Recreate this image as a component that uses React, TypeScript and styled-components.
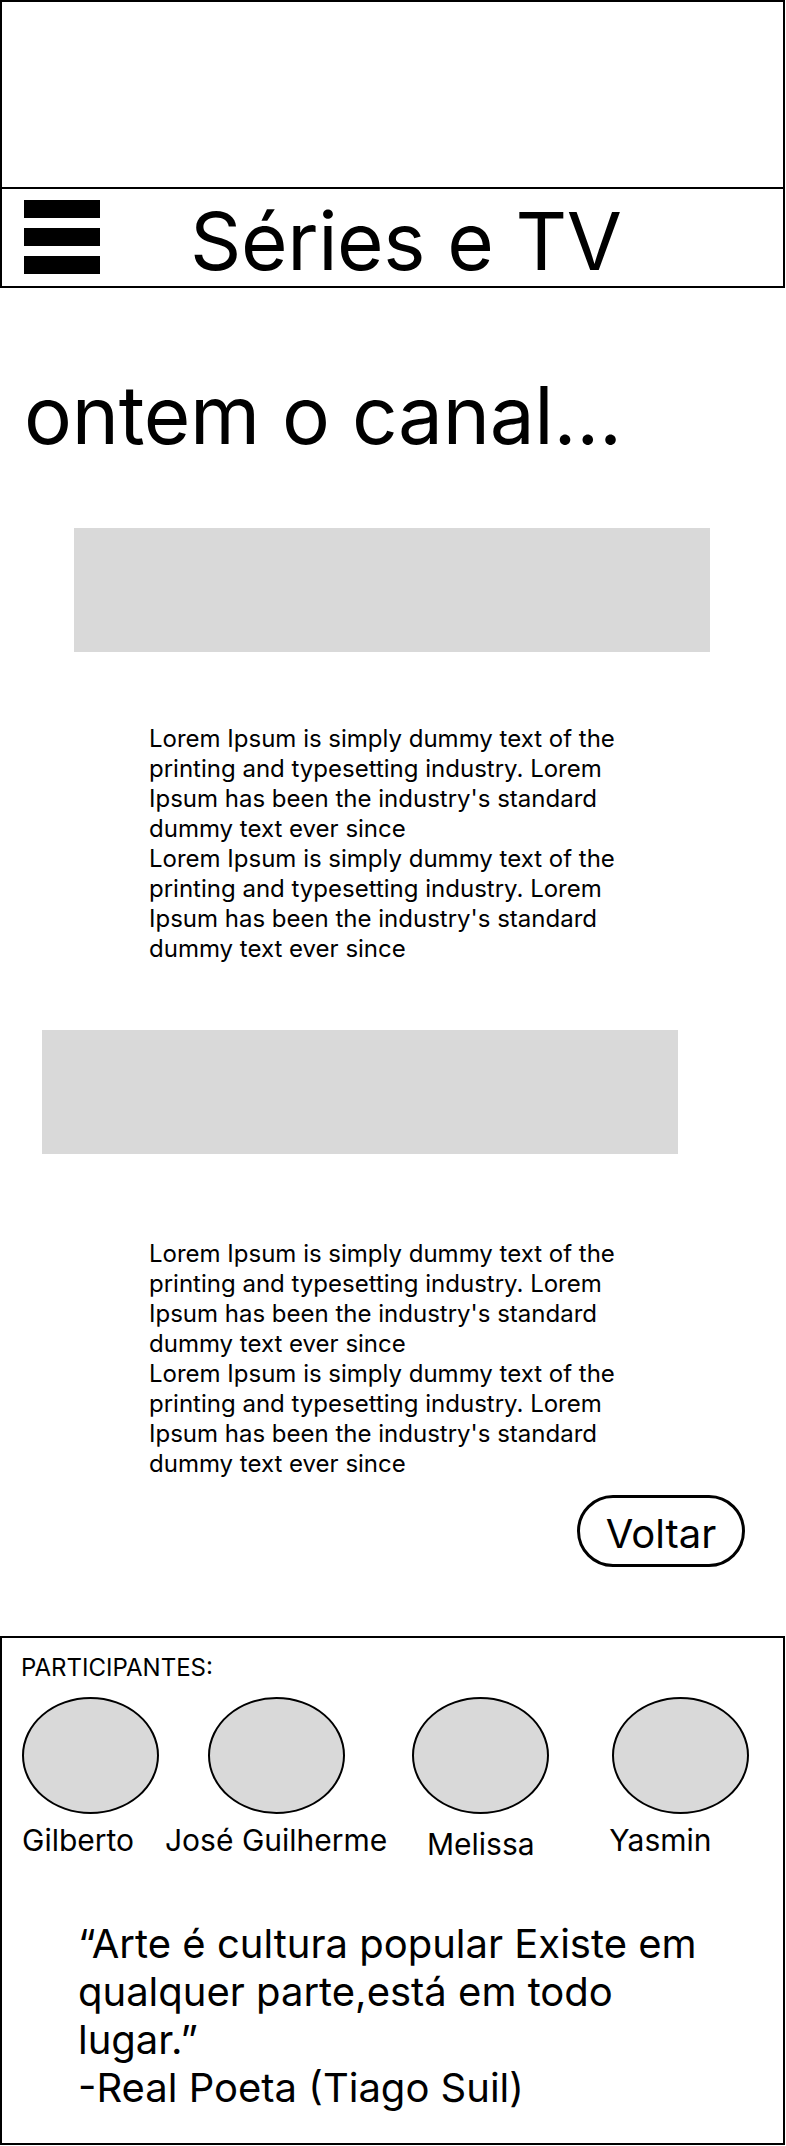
import React from "react";
import styled, { createGlobalStyle } from "styled-components";

const GlobalStyle = createGlobalStyle`
  * { box-sizing: border-box; }
  body {
    margin: 0;
    background: #ffffff;
    color: #000000;
    font-family: Inter, "Noto Sans", "Liberation Sans", sans-serif;
  }
`;

const Page = styled.main`
  width: 786px;
  display: flex;
  flex-direction: column;
  align-items: flex-start;
`;

const Header = styled.header`
  width: 785px;
  border: 2px solid #000;
  display: flex;
  flex-direction: column;
`;

const Banner = styled.div`
  height: 185px;
`;

const NavBar = styled.nav`
  height: 99px;
  border-top: 2px solid #000;
  display: flex;
  align-items: flex-start;
  padding-left: 22px;
`;

const Burger = styled.div`
  margin-top: 11px;
  display: flex;
  flex-direction: column;
  gap: 10px;
`;

const BurgerBar = styled.span`
  display: block;
  width: 76px;
  height: 18px;
  background: #000;
`;

const SiteTitle = styled.h1`
  margin: 12px 0 0 90px;
  font-size: 80px;
  font-weight: 400;
  line-height: 80px;
  letter-spacing: -0.4px;
`;

const Headline = styled.h2`
  margin: 78px 0 0 24px;
  font-size: 80px;
  font-weight: 400;
  line-height: 97px;
  letter-spacing: -0.3px;
`;

const Placeholder = styled.div<{ $left: number; $top: number }>`
  margin-top: ${(p) => p.$top}px;
  margin-left: ${(p) => p.$left}px;
  width: 636px;
  height: 124px;
  background: #d9d9d9;
`;

const Body = styled.p<{ $top: number }>`
  margin: ${(p) => p.$top}px 0 0 149px;
  width: 490px;
  font-size: 24px;
  line-height: 30px;
  font-weight: 400;
`;

const BackRow = styled.div`
  width: 100%;
  display: flex;
  justify-content: flex-start;
  margin-top: 16px;
`;

const BackButton = styled.button`
  margin-left: 577px;
  width: 168px;
  height: 72px;
  border: 3px solid #000;
  border-radius: 36px;
  background: #fff;
  color: #000;
  font-family: Inter, "Noto Sans", sans-serif;
  font-size: 40px;
  line-height: 48px;
  padding: 6px 0 0 0;
  cursor: pointer;
`;

const Footer = styled.footer`
  margin-top: 69px;
  width: 785px;
  height: 509px;
  border: 2px solid #000;
  display: flex;
  flex-direction: column;
  padding: 15px 0 0 19px;
`;

const SectionLabel = styled.h3`
  margin: 0;
  font-size: 24px;
  font-weight: 400;
  line-height: 29px;
`;

const People = styled.ul`
  list-style: none;
  margin: 15px 0 0 1px;
  padding: 0;
  display: flex;
  align-items: flex-start;
`;

const Person = styled.li<{ $offset: number; $align: "flex-start" | "center" }>`
  margin-left: ${(p) => p.$offset}px;
  display: flex;
  flex-direction: column;
  align-items: ${(p) => p.$align};
  gap: 8px;
`;

const Avatar = styled.div`
  width: 137px;
  height: 117px;
  border-radius: 50%;
  border: 2px solid #000;
  background: #d9d9d9;
`;

const PersonName = styled.span<{ $drop: number; $nudge: number }>`
  margin-top: ${(p) => p.$drop}px;
  margin-left: ${(p) => p.$nudge}px;
  font-size: 30px;
  line-height: 36px;
  white-space: nowrap;
`;

const Quote = styled.blockquote`
  margin: 58px 0 0 57px;
  width: 640px;
  font-size: 40px;
  line-height: 48px;
`;

const people = [
  { name: "Gilberto", offset: 0, align: "flex-start" as const, drop: 0, nudge: 0 },
  { name: "José Guilherme", offset: 6, align: "center" as const, drop: 0, nudge: 0 },
  { name: "Melissa", offset: 25, align: "center" as const, drop: 4, nudge: 0 },
  { name: "Yasmin", offset: 63, align: "flex-start" as const, drop: 0, nudge: -3 },
];

const lorem =
  "Lorem Ipsum is simply dummy text of the printing and typesetting industry. Lorem Ipsum has been the industry's standard dummy text ever since";

export default function App() {
  return (
    <>
      <GlobalStyle />
      <Page>
        <Header>
          <Banner />
          <NavBar>
            <Burger aria-label="menu">
              <BurgerBar />
              <BurgerBar />
              <BurgerBar />
            </Burger>
            <SiteTitle>Séries e TV</SiteTitle>
          </NavBar>
        </Header>

        <Headline>ontem o canal...</Headline>

        <Placeholder $left={74} $top={65} />
        <Body $top={72}>
          {lorem}
          <br />
          {lorem}
        </Body>

        <Placeholder $left={42} $top={66} />
        <Body $top={85}>
          {lorem}
          <br />
          {lorem}
        </Body>

        <BackRow>
          <BackButton>Voltar</BackButton>
        </BackRow>

        <Footer>
          <SectionLabel>PARTICIPANTES:</SectionLabel>
          <People>
            {people.map((p) => (
              <Person key={p.name} $offset={p.offset} $align={p.align}>
                <Avatar />
                <PersonName $drop={p.drop} $nudge={p.nudge}>
                  {p.name}
                </PersonName>
              </Person>
            ))}
          </People>
          <Quote>
            “Arte é cultura popular Existe em qualquer parte,está em todo lugar.”
            <br />
            -Real Poeta (Tiago Suil)
          </Quote>
        </Footer>
      </Page>
    </>
  );
}
